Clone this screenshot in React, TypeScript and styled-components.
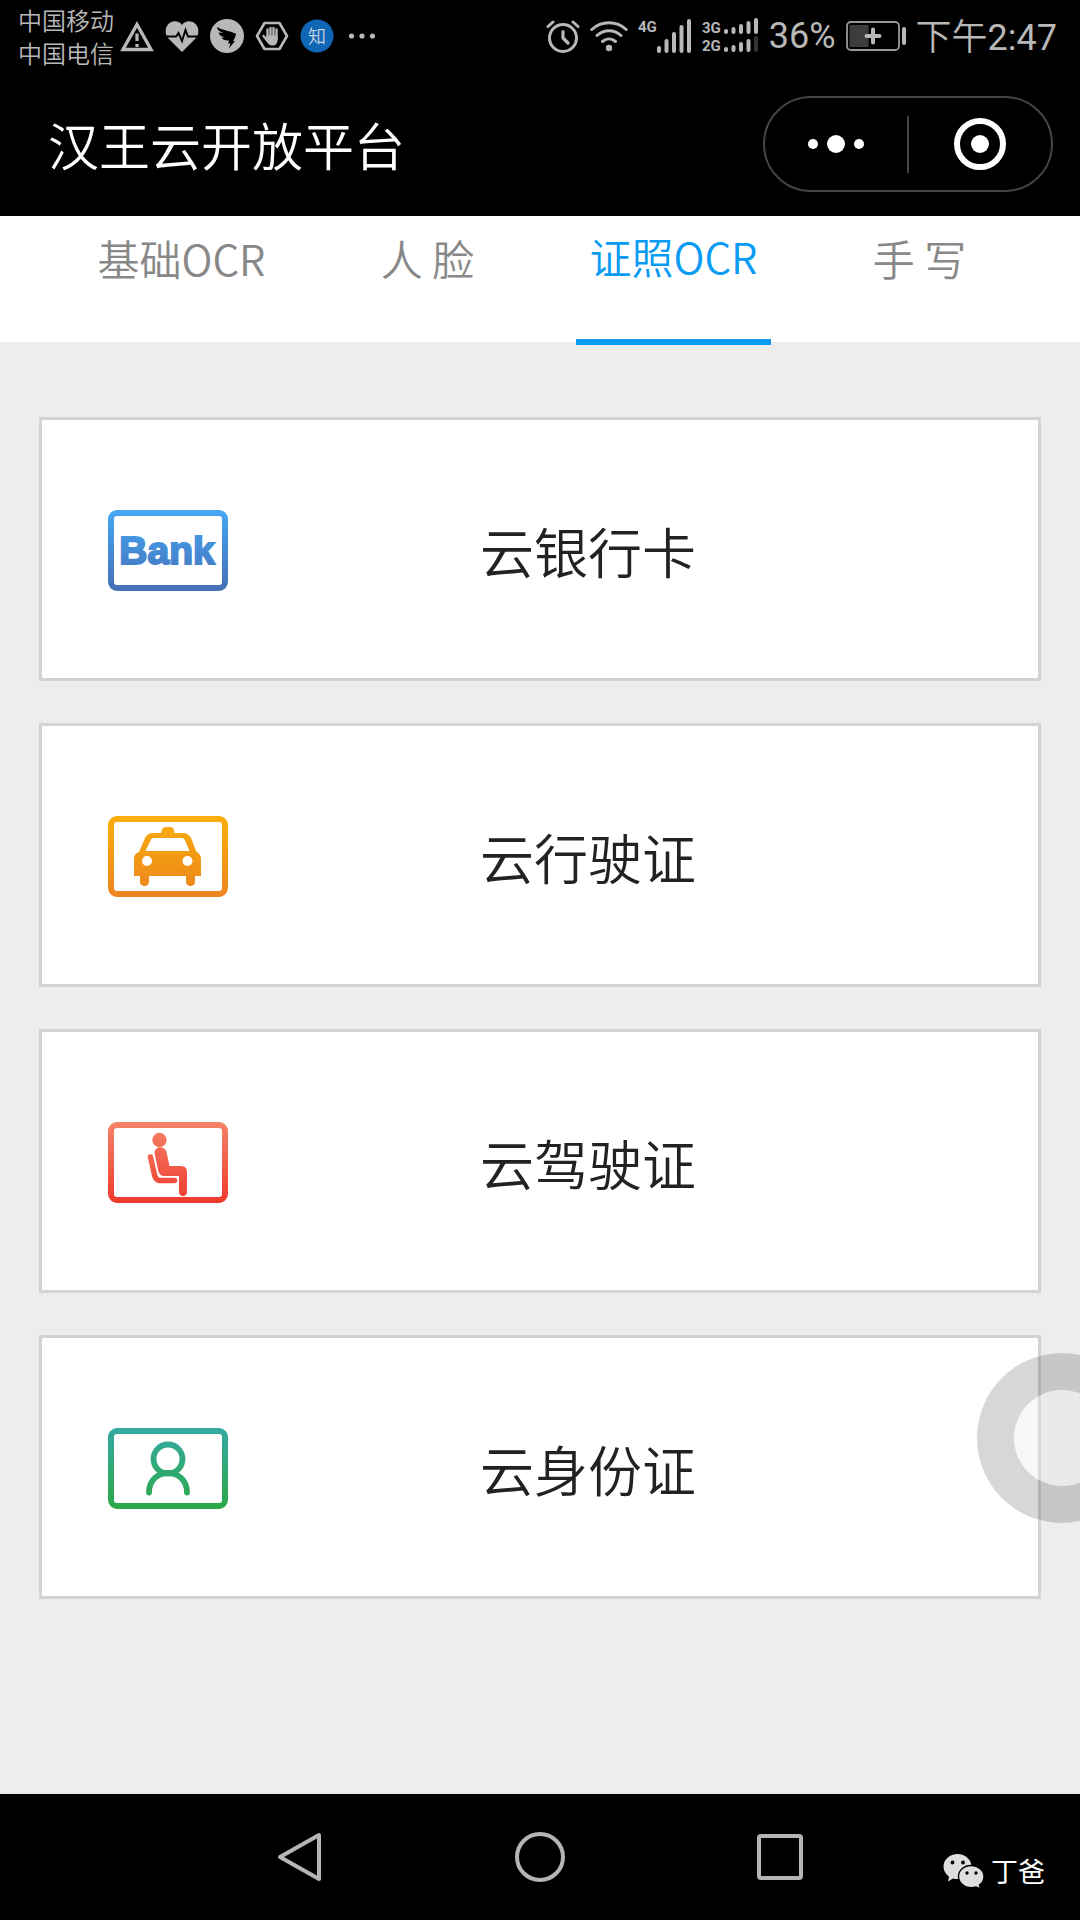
import React, { useState } from "react";
import styled, { createGlobalStyle } from "styled-components";

const GlobalStyle = createGlobalStyle`
  * { box-sizing: border-box; }
  body {
    margin: 0;
    background: #ededed;
    font-family: "Noto Sans CJK SC DemiLight", "Noto Sans CJK SC", sans-serif;
  }
  button {
    margin: 0;
    padding: 0;
    border: 0;
    background: none;
    color: inherit;
    font: inherit;
    cursor: pointer;
  }
  svg { display: block; flex: none; }
`;

const Page = styled.div`
  position: relative;
  display: flex;
  flex-direction: column;
  min-height: 100vh;
  overflow: hidden;
`;

const StatusBar = styled.div`
  display: flex;
  justify-content: space-between;
  height: 72px;
  padding: 0 23px 0 18px;
  background: #000;
  color: #b8b8b8;
`;

const StatusGroup = styled.div<{ $gap: number }>`
  display: flex;
  align-items: center;
  gap: ${(p) => p.$gap}px;
`;

const Carriers = styled.div`
  margin-right: -5px;
  font-size: 24px;
  line-height: 33px;
`;

const StatusText = styled.span`
  font-family: Roboto, "Noto Sans CJK SC DemiLight", "Noto Sans CJK SC", sans-serif;
  font-size: 36px;
  line-height: 48px;
  white-space: nowrap;
`;

const Clock = styled(StatusText)`
  padding-top: 4px;
`;

const Header = styled.header`
  display: flex;
  align-items: center;
  justify-content: space-between;
  height: 144px;
  padding: 0 27px 0 48px;
  background: #000;
  color: #fff;
`;

const Title = styled.h1`
  margin: 0;
  font-size: 51px;
  font-weight: 400;
  line-height: 72px;
`;

const Capsule = styled.div`
  display: flex;
  align-items: center;
  width: 290px;
  height: 96px;
  border: 2px solid #444;
  border-radius: 48px;
`;

const CapsuleButton = styled.button`
  display: flex;
  flex: 1;
  align-items: center;
  justify-content: center;
  height: 100%;
`;

const CapsuleDivider = styled.span`
  width: 2px;
  height: 57px;
  background: #444;
`;

const Tabs = styled.nav`
  display: flex;
  align-items: flex-start;
  gap: 51px;
  height: 126px;
  padding: 0 63px 0 84px;
  background: #fff;
`;

const Tab = styled.button<{ $active: boolean }>`
  display: flex;
  flex: 1;
  justify-content: center;
  height: 129px;
  border-bottom: 6px solid ${(p) => (p.$active ? "#0a9bf5" : "transparent")};
  color: ${(p) => (p.$active ? "#0a9bf5" : "#888")};
  font-size: 42px;
  line-height: ${(p) => (p.$active ? 80 : 84)}px;
  white-space: nowrap;
`;

const Content = styled.main`
  display: flex;
  flex: 1;
  flex-direction: column;
  gap: 42px;
  padding: 75px 39px 42px;
`;

const Card = styled.button`
  display: flex;
  align-items: center;
  gap: 252px;
  height: 264px;
  padding: 3px 66px 0;
  border: 3px solid #d3d3d3;
  background: #fff;
  color: #222;
  text-align: left;
`;

const CardLabel = styled.span`
  font-size: 54px;
  line-height: 78px;
  white-space: nowrap;
`;

const AssistBall = styled.button`
  position: absolute;
  top: 1353px;
  right: -67px;
  width: 170px;
  height: 170px;
  border: 37px solid rgba(0, 0, 0, 0.155);
  border-radius: 50%;
  background: rgba(228, 228, 228, 0.3);
  background-clip: padding-box;
`;

const NavBar = styled.footer`
  display: grid;
  grid-template-columns: 1fr 240px 240px 240px 1fr;
  align-items: center;
  height: 126px;
  background: #000;
`;

const NavButton = styled.button`
  display: flex;
  justify-content: center;
`;

const Signature = styled.div`
  display: flex;
  align-items: center;
  gap: 6px;
  padding: 28px 0 0 43px;
  color: #fff;
  font-family: "Noto Sans CJK SC", sans-serif;
  font-size: 27px;
  line-height: 36px;
  white-space: nowrap;
`;

const badgeFont = "Roboto, sans-serif";

const WarningIcon = () => (
  <svg width="34" height="34" viewBox="0 0 34 34">
    <path d="M17 5.500 31 30.500H3Z" fill="none" stroke="#b8b8b8" strokeWidth="3.400" />
    <path d="M17 14.500v7.500M17 25v3" stroke="#b8b8b8" strokeWidth="3.200" />
  </svg>
);

const HeartIcon = () => (
  <svg width="34" height="34" viewBox="0 0 34 34">
    <path
      d="M17 33 3.500 19.500C-.5 15 0 9 3 5.500C7 1 14 1.500 17 6C20 1.500 27 1 31 5.500C34 9 34.500 15 30.500 19.500Z"
      fill="#b8b8b8"
    />
    <path d="M0 17.500h11l2.500-3.500 3.500 8 3.500-11 2.500 6.500h11" fill="none" stroke="#000" strokeWidth="2" />
  </svg>
);

const WingIcon = () => (
  <svg width="34" height="34" viewBox="0 0 34 34">
    <circle cx="17" cy="17" r="17" fill="#b8b8b8" />
    <path
      d="M7 8C12 11 20 12 25.500 14.500C26.500 15.500 25 19 23 22H25L19 29.500 20.500 24.500H18L19 21.500C15.500 22 12.500 20.500 11.500 18.500L15 18.500C11 17.500 9 15.500 8.500 13.500L13 14C9.500 12.500 7 10.500 7 8Z"
      fill="#000"
    />
  </svg>
);

const HandIcon = () => (
  <svg width="34" height="34" viewBox="0 0 34 34">
    <path d="M9.500 4h15L32 17l-7.500 13h-15L2 17Z" fill="none" stroke="#b8b8b8" strokeWidth="2.600" strokeLinejoin="round" />
    <path
      d="M12.500 10.500V18M15.500 9v9M18.500 9v9M21.500 10.500V20M8.500 17l4 5"
      stroke="#b8b8b8"
      strokeWidth="2.400"
      strokeLinecap="round"
    />
    <path d="M11.500 16.500h11V21c0 3-1.500 5.500-4.500 5.500-4 0-5-2-7-5Z" fill="#b8b8b8" />
  </svg>
);

const ZhiIcon = () => (
  <svg width="34" height="34" viewBox="0 0 34 34">
    <circle cx="17" cy="17" r="16.500" fill="#0f67b6" />
    <text x="17" y="23.500" textAnchor="middle" fontSize="18" fill="#c8d4e0">知</text>
  </svg>
);

const MoreIcon = () => (
  <svg width="34" height="34" viewBox="0 0 34 34" fill="#b8b8b8">
    <circle cx="6.500" cy="17" r="2.600" />
    <circle cx="17" cy="17" r="2.600" />
    <circle cx="27.500" cy="17" r="2.600" />
  </svg>
);

const AlarmIcon = () => (
  <svg width="34" height="34" viewBox="0 0 34 34" fill="none" stroke="#b8b8b8" strokeLinecap="round">
    <circle cx="17" cy="19" r="13.500" strokeWidth="3" />
    <path d="M17 12.500V19l5 5" strokeWidth="3.200" strokeLinejoin="round" />
    <path d="M2 7.500 7 3M32 7.500 27 3" strokeWidth="3" />
  </svg>
);

const WifiIcon = () => (
  <svg width="38" height="34" viewBox="0 0 38 34" fill="none" stroke="#b8b8b8" strokeWidth="3" strokeLinecap="round">
    <path d="M1.800 10.500C11.500 1.500 26.500 1.500 36.200 10.500" />
    <path d="M7 16.500C14 10 24 10 31 16.500" />
    <path d="M12.500 22.500C16.500 19 21.500 19 25.500 22.500" />
    <circle cx="19" cy="29" r="3.200" fill="#b8b8b8" stroke="none" />
  </svg>
);

interface BarsProps {
  xs: number[];
  tops: number[];
  bottom: number;
  strength?: number;
}

// Signal strength columns; those past `strength` are dimmed.
const Bars = ({ xs, tops, bottom, strength = 5 }: BarsProps) => (
  <g fill="#b8b8b8">
    {xs.map((x, i) => (
      <rect key={x} x={x} y={tops[i]} width="4" height={bottom - tops[i]} rx="2" opacity={i < strength ? 1 : 0.28} />
    ))}
  </g>
);

const SignalIcon = () => (
  <svg width="54" height="36" viewBox="0 0 54 36">
    <text x="0" y="14" fontFamily={badgeFont} fontSize="15" fontWeight="700" fill="#b8b8b8">4G</text>
    <Bars xs={[19, 26.5, 34, 41.5, 49]} tops={[28, 21, 14, 7, 1]} bottom={35} />
  </svg>
);

const DualSignalIcon = () => (
  <svg width="57" height="36" viewBox="0 0 57 36">
    <g fontFamily={badgeFont} fontSize="15" fontWeight="700" fill="#b8b8b8">
      <text x="0" y="15">3G</text>
      <text x="0" y="33">2G</text>
    </g>
    <Bars xs={[22, 29.5, 37, 44.5, 52]} tops={[11, 9, 6, 3, 0]} bottom={16} />
    <Bars xs={[22, 29.5, 37, 44.5, 52]} tops={[29, 27, 24, 21, 18]} bottom={34} strength={4} />
  </svg>
);

const BatteryIcon = () => (
  <svg width="60" height="30" viewBox="0 0 60 30">
    <rect x="1" y="1" width="52" height="28" rx="4" fill="none" stroke="#999" strokeWidth="1.800" />
    <rect x="3.500" y="4" width="19" height="22" fill="#3c3c3c" />
    <path d="M27 8.500v13M20.500 15h13" stroke="#b8b8b8" strokeWidth="4" strokeLinecap="round" />
    <rect x="56" y="6" width="4" height="18" rx="2" fill="#b8b8b8" />
  </svg>
);

interface BadgeProps {
  id: string;
  from: string;
  to: string;
  children: React.ReactNode;
}

// Outlined card shape whose frame and drawing share one vertical gradient.
const Badge = ({ id, from, to, children }: BadgeProps) => (
  <svg width="120" height="81" viewBox="0 0 120 81">
    <defs>
      <linearGradient id={id} gradientUnits="userSpaceOnUse" x1="0" y1="0" x2="0" y2="81">
        <stop offset="0" stopColor={from} />
        <stop offset="1" stopColor={to} />
      </linearGradient>
    </defs>
    <rect x="3" y="3" width="114" height="75" rx="6" fill="none" stroke={`url(#${id})`} strokeWidth="6" />
    {children}
  </svg>
);

const BankBadge = () => (
  <Badge id="bank" from="#45a8f6" to="#466fb5">
    <text
      x="59"
      y="54"
      textAnchor="middle"
      fontFamily="'Liberation Sans', Arial, sans-serif"
      fontSize="39"
      fontWeight="700"
      fill="url(#bank)"
      stroke="url(#bank)"
      strokeWidth="2"
    >
      Bank
    </text>
  </Badge>
);

const TaxiBadge = () => (
  <Badge id="taxi" from="#fbaf0a" to="#ec8420">
    <path
      fillRule="evenodd"
      fill="url(#taxi)"
      d="M53 17C53.500 13 55 11 58 11H62C65 11 66 13 66.500 17H74C79 17 81.500 19 83 22L88.500 36C91 37 93 39 93 43V60H87V66C87 71.500 78 71.500 78 66V60H41V66C41 71.500 32 71.500 32 66V60H26V43C26 39 28 37 31 36L37 22C38.500 19 41 17 45 17ZM46 22C44 22 43 23 42.500 24.500L37.500 35H81.500L77 24.500C76.500 23 75.500 22 73.500 22ZM39 40A5 5 0 1 0 39 50A5 5 0 1 0 39 40ZM79.500 40A5 5 0 1 0 79.500 50A5 5 0 1 0 79.500 40Z"
    />
  </Badge>
);

const SeatBadge = () => (
  <Badge id="seat" from="#f48468" to="#f03a2e">
    <circle cx="51.500" cy="18" r="7.200" fill="url(#seat)" />
    <path
      d="M46.500 31C46.500 23.500 57 23.500 58.500 30L61.500 44H72C77 44 79 46 79 50V70C79 75.500 71 75.500 71 70V54H57C53 54 51 52 50 48Z"
      fill="url(#seat)"
    />
    <path d="M42.500 35 46.500 53Q48 58.500 52 58.500H66.500" fill="none" stroke="url(#seat)" strokeWidth="5.500" strokeLinecap="round" strokeLinejoin="round" />
  </Badge>
);

const PersonBadge = () => (
  <Badge id="person" from="#33aaa4" to="#2ea846">
    <circle cx="60" cy="31" r="14.500" fill="none" stroke="url(#person)" strokeWidth="5.800" />
    <path d="M41 64.500C41 38.500 79 38.500 79 64.500" fill="none" stroke="url(#person)" strokeWidth="5.800" strokeLinecap="round" />
  </Badge>
);

const WeChatIcon = () => (
  <svg width="42" height="36" viewBox="0 0 42 36">
    <path
      d="M14.500 1C22 1 28.500 6.500 28.500 13.500S22 26 14.500 26C13 26 11.500 25.800 10 25.400L5 28.500 6 23.500C2.500 21 .5 17.500 .5 13.500C.5 6.500 7 1 14.500 1Z"
      fill="#dedede"
    />
    <path
      d="M28 12.500C35 12.500 41 17.500 41 23.500C41 27 39.300 30 36.500 32L37.500 36 33 34C31.500 34.500 30 34.700 28 34.700C21 34.700 15.500 29.500 15.500 23.500S21 12.500 28 12.500Z"
      fill="#dedede"
      stroke="#000"
      strokeWidth="1.400"
    />
    <g fill="#000">
      <circle cx="9.500" cy="9.500" r="1.900" />
      <circle cx="20" cy="9.500" r="1.900" />
      <circle cx="24" cy="20" r="1.700" />
      <circle cx="33" cy="20" r="1.700" />
    </g>
  </svg>
);

const tabs = ["基础OCR", "人 脸", "证照OCR", "手 写"];

const services = [
  { label: "云银行卡", Icon: BankBadge },
  { label: "云行驶证", Icon: TaxiBadge },
  { label: "云驾驶证", Icon: SeatBadge },
  { label: "云身份证", Icon: PersonBadge },
];

export default function App() {
  const [active, setActive] = useState(2);

  return (
    <Page>
      <GlobalStyle />
      <StatusBar>
        <StatusGroup $gap={11}>
          <Carriers>
            <div>中国移动</div>
            <div>中国电信</div>
          </Carriers>
          <WarningIcon />
          <HeartIcon />
          <WingIcon />
          <HandIcon />
          <ZhiIcon />
          <MoreIcon />
        </StatusGroup>
        <StatusGroup $gap={10}>
          <AlarmIcon />
          <WifiIcon />
          <SignalIcon />
          <DualSignalIcon />
          <StatusText>36%</StatusText>
          <BatteryIcon />
          <Clock>下午2:47</Clock>
        </StatusGroup>
      </StatusBar>

      <Header>
        <Title>汉王云开放平台</Title>
        <Capsule>
          <CapsuleButton aria-label="更多">
            <svg width="58" height="18" viewBox="0 0 58 18" fill="#fff">
              <circle cx="6" cy="9" r="5" />
              <circle cx="29" cy="9" r="9" />
              <circle cx="52" cy="9" r="5" />
            </svg>
          </CapsuleButton>
          <CapsuleDivider />
          <CapsuleButton aria-label="关闭">
            <svg width="52" height="52" viewBox="0 0 52 52">
              <circle cx="26" cy="26" r="23" fill="none" stroke="#fff" strokeWidth="6" />
              <circle cx="26" cy="26" r="9" fill="#fff" />
            </svg>
          </CapsuleButton>
        </Capsule>
      </Header>

      <Tabs>
        {tabs.map((name, i) => (
          <Tab key={name} $active={i === active} aria-pressed={i === active} onClick={() => setActive(i)}>
            {name}
          </Tab>
        ))}
      </Tabs>

      <Content>
        {services.map(({ label, Icon }) => (
          <Card key={label}>
            <Icon />
            <CardLabel>{label}</CardLabel>
          </Card>
        ))}
      </Content>

      <NavBar>
        <span />
        <NavButton aria-label="返回">
          <svg width="50" height="50" viewBox="0 0 50 50">
            <path d="M44 3V47L5 25Z" fill="none" stroke="#b5b5b5" strokeWidth="4" strokeLinejoin="round" />
          </svg>
        </NavButton>
        <NavButton aria-label="主页">
          <svg width="50" height="50" viewBox="0 0 50 50">
            <circle cx="25" cy="25" r="23" fill="none" stroke="#b5b5b5" strokeWidth="4" />
          </svg>
        </NavButton>
        <NavButton aria-label="最近任务">
          <svg width="50" height="50" viewBox="0 0 50 50">
            <rect x="4" y="4" width="42" height="42" rx="2" fill="none" stroke="#b5b5b5" strokeWidth="4" />
          </svg>
        </NavButton>
        <Signature>
          <WeChatIcon />
          <span>丁爸</span>
        </Signature>
      </NavBar>

      <AssistBall aria-label="悬浮球" />
    </Page>
  );
}
